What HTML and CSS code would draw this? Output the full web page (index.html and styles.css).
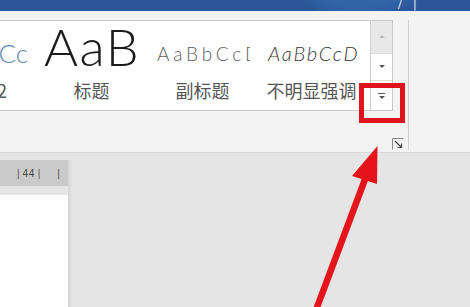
FILE: index.html
```html
<!DOCTYPE html>
<html>
<head>
<meta charset="utf-8">
<link rel="stylesheet" href="styles.css">
</head>
<body>
<div class="screen">
  <div class="titlebar">
    <span class="tb-glyph g1">/</span>
    <span class="tb-glyph g2">|</span>
  </div>
  <div class="ribbon">
    <div class="group">
      <div class="gallery">
        <div class="items">
          <div class="item item1">
            <div class="preview p1">AaBbCc</div>
            <div class="label l1">标题 2</div>
          </div>
          <div class="item item2">
            <div class="preview p2">AaB</div>
            <div class="label">标题</div>
          </div>
          <div class="item item3">
            <div class="preview p3">AaBbCcD</div>
            <div class="label">副标题</div>
          </div>
          <div class="item item4">
            <div class="preview p4">AaBbCcD</div>
            <div class="label">不明显强调</div>
          </div>
        </div>
        <div class="scroller">
          <div class="sbtn up"><span class="tri tri-up"></span></div>
          <div class="sbtn down"><span class="tri tri-down"></span></div>
          <div class="sbtn more"><span class="bar"></span><span class="tri tri-down"></span></div>
        </div>
      </div>
      <div class="launcher-row">
        <svg class="launcher" width="12" height="12" viewBox="0 0 12 12">
          <path d="M0.5 0.5 H11.5 M0.5 0.5 V11.5" stroke="#8a8a8a" stroke-width="1" fill="none"/>
          <path d="M3 3 L9.5 9.5 M5.5 9.5 H9.5 V5.5" stroke="#444" stroke-width="1.2" fill="none"/>
        </svg>
      </div>
    </div>
    <div class="sep"></div>
    <div class="rest"></div>
  </div>
  <div class="docarea">
    <div class="leftcol">
      <div class="ruler"><span class="tick">|</span><span class="num">44</span><span class="tick">|</span><span class="tick far">|</span></div>
      <div class="page"></div>
    </div>
    <div class="shadow"></div>
    <div class="canvas"></div>
  </div>
  <div class="redbox"></div>
  <svg class="arrow" width="470" height="307" viewBox="0 0 470 307">
    <line x1="316" y1="310" x2="367" y2="174" stroke="#e5141b" stroke-width="6.5"/>
    <polygon points="377.5,146 352,176 377,184" fill="#e5141b"/>
  </svg>
</div>
</body>
</html>
```
FILE: styles.css
```css
html, body {
  margin: 0;
  padding: 0;
}
body {
  width: 470px;
  height: 307px;
  overflow: hidden;
  background: #e5e5e5;
  font-family: "Lato", "Noto Sans", "Noto Sans CJK SC", sans-serif;
}
.screen {
  position: relative;
  width: 470px;
  height: 307px;
  overflow: hidden;
}
.titlebar {
  position: relative;
  height: 11px;
  background: radial-gradient(ellipse 70px 40px at 360px -20px, #3767ab 0%, #3163a7 70%, #2b579a 100%), #2b579a;
  background-color: #2b579a;
}
.tb-glyph {
  position: absolute;
  top: 0;
  line-height: 10px;
  color: #e8eef7;
  font-size: 11px;
  font-family: "DejaVu Sans", sans-serif;
}
.g1 { left: 398px; }
.g2 { left: 413px; }

.ribbon {
  display: flex;
  height: 141px;
  background: #f3f3f3;
  border-bottom: 1px solid #d8d8d8;
}
.group {
  width: 408px;
  display: flex;
  flex-direction: column;
  padding-top: 9px;
}
.gallery {
  display: flex;
  height: 89px;
  width: 392px;
  background: #fff;
  border-top: 1px solid #c8c8c8;
  border-bottom: 1px solid #c8c8c8;
  border-right: 1px solid #c8c8c8;
}
.items {
  display: flex;
  width: 371px;
}
.item {
  display: flex;
  flex-direction: column;
  overflow: hidden;
  flex-shrink: 0;
}
.item1 { width: 40px; }
.item2 { width: 103px; }
.item3 { width: 119px; }
.item4 { width: 99px; }
.preview {
  height: 50px;
  white-space: nowrap;
  overflow: hidden;
  box-sizing: border-box;
}
.p1 {
  text-align: right;
  padding-right: 12px;
  padding-top: 17px;
  font-size: 26px;
  line-height: 30px;
  color: #5c8ab6;
  font-weight: 300;
  direction: rtl;
}
.p2 {
  padding-left: 4px;
  font-size: 52px;
  line-height: 56px;
  letter-spacing: 1.5px;
  margin-top: -3px;
  height: 53px;
  color: #1b1b1b;
  font-weight: 300;
}
.p3 {
  padding-left: 14px;
  width: 107px;
  padding-top: 21px;
  font-size: 19px;
  line-height: 23px;
  letter-spacing: 3.8px;
  color: #5e5e5e;
  font-weight: 300;
}
.p4 {
  padding-left: 6px;
  padding-top: 20px;
  font-size: 20px;
  line-height: 24px;
  letter-spacing: 1.8px;
  font-style: italic;
  font-weight: 300;
  color: #3a3a3a;
}
.label {
  font-family: "Noto Sans CJK SC", sans-serif;
  font-size: 18px;
  line-height: 22px;
  padding-top: 8px;
  color: #555;
  text-align: center;
  white-space: nowrap;
}
.l1 {
  text-align: right;
  padding-right: 33px;
  direction: rtl;
}
.scroller {
  width: 21px;
  display: flex;
  flex-direction: column;
  border-left: 1px solid #d0d0d0;
}
.sbtn {
  display: flex;
  justify-content: center;
  align-items: center;
  flex-direction: column;
  gap: 2px;
}
.up {
  height: 32px;
  background: #e8e8e8;
  border-bottom: 1px solid #dcdcdc;
}
.down {
  height: 27px;
}
.more {
  height: 29px;
  border-top: 1px solid #dcdcdc;
}
.tri {
  width: 0;
  height: 0;
  border-left: 3.5px solid transparent;
  border-right: 3.5px solid transparent;
}
.tri-up {
  border-bottom: 3.5px solid #b8b8b8;
}
.tri-down {
  border-top: 3.5px solid #555;
}
.bar {
  width: 7px;
  height: 1px;
  background: #555;
}
.launcher-row {
  display: flex;
  justify-content: flex-end;
  padding-top: 27px;
  padding-right: 4px;
}
.launcher {
  display: block;
}
.sep {
  width: 1px;
  margin-top: 9px;
  height: 130px;
  background: #d0d0d0;
}
.rest {
  flex: 1;
}

.docarea {
  display: flex;
  height: 154px;
  padding-top: 7px;
}
.leftcol {
  width: 68px;
  display: flex;
  flex-direction: column;
}
.ruler {
  height: 26px;
  background: #cacaca;
  display: flex;
  align-items: center;
  font-family: "Liberation Sans", sans-serif;
  font-size: 10px;
  color: #444;
  padding-left: 17px;
  box-sizing: border-box;
}
.tick { color: #555; }
.num { margin: 0 3px; letter-spacing: 0.5px; }
.tick.far { margin-left: 17px; }
.page {
  margin-top: 9px;
  flex: 1;
  background: #fff;
}
.shadow {
  width: 4px;
  background: linear-gradient(to right, #d2d2d2, #e5e5e5);
}
.canvas {
  flex: 1;
}

.redbox {
  position: absolute;
  left: 359px;
  top: 83px;
  width: 36px;
  height: 30px;
  border: 5px solid #e0141c;
}
.arrow {
  position: absolute;
  left: 0;
  top: 0;
}
```
